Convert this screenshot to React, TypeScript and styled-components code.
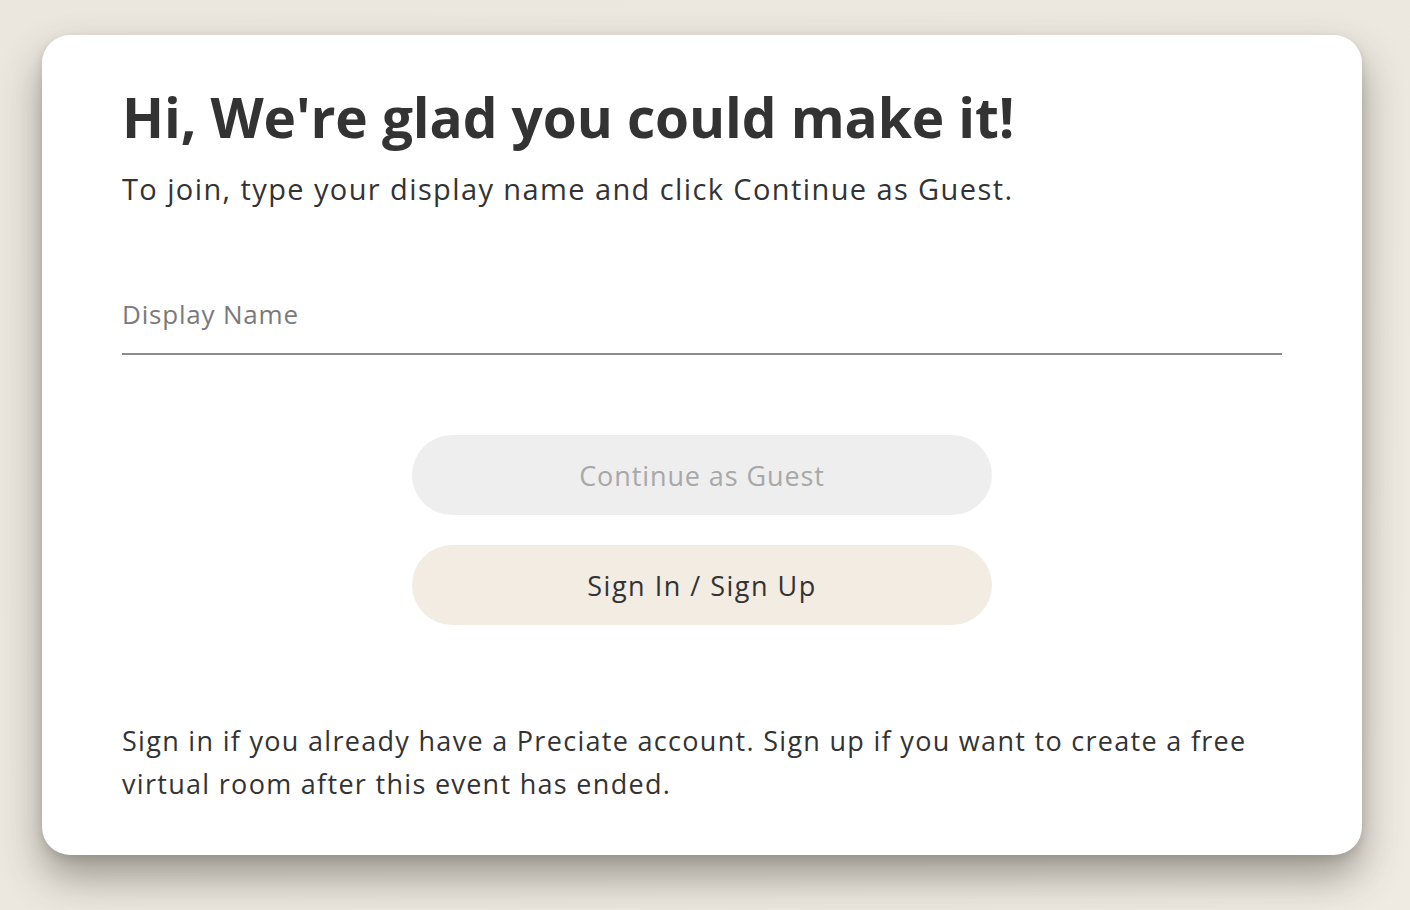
import React from "react";
import styled, { createGlobalStyle } from "styled-components";

const Global = createGlobalStyle`
  html, body { margin: 0; padding: 0; }
  body {
    background: #ebe7df;
    font-family: "Open Sans", "Noto Sans", sans-serif;
    color: #333333;
    -webkit-font-smoothing: antialiased;
  }
`;

const Page = styled.div`
  width: 1410px;
  height: 910px;
  box-sizing: border-box;
  padding: 35px 48px 0 42px;
  background: linear-gradient(135deg, #ebe7df 0%, #ece8e0 60%, #efebe3 100%);
`;

const Card = styled.div`
  width: 1320px;
  height: 820px;
  box-sizing: border-box;
  background: #ffffff;
  border-radius: 28px;
  box-shadow: 0 22px 40px rgba(60, 55, 45, 0.45), 0 4px 10px rgba(60, 55, 45, 0.15);
  padding: 50px 80px 0 80px;
  display: flex;
  flex-direction: column;
`;

const Title = styled.h1`
  margin: 0;
  font-size: 55px;
  font-weight: 700;
  line-height: 64px;
  letter-spacing: -0.1px;
`;

const Subtitle = styled.p`
  margin: 23px 0 0;
  font-size: 29px;
  line-height: 34px;
  font-weight: 400;
  letter-spacing: 1.4px;
`;

const Field = styled.label`
  margin-top: 92px;
  display: block;
  border-bottom: 2px solid #8c8c8c;
  padding-bottom: 23px;
`;

const Input = styled.input`
  border: none;
  outline: none;
  width: 100%;
  padding: 0;
  font-family: inherit;
  font-size: 26px;
  line-height: 32px;
  letter-spacing: 0.8px;
  color: #333;
  &::placeholder { color: #7a7a7a; }
`;

const Buttons = styled.div`
  margin-top: 80px;
  display: flex;
  flex-direction: column;
  align-items: center;
  gap: 30px;
`;

const Button = styled.button<{ $variant: "disabled" | "cream" }>`
  width: 580px;
  height: 80px;
  border: none;
  border-radius: 40px;
  font-family: inherit;
  font-size: 27px;
  letter-spacing: ${(p) => (p.$variant === "disabled" ? "0.9px" : "1.5px")};
  background: ${(p) => (p.$variant === "disabled" ? "#eeeeee" : "#f2ece3")};
  color: ${(p) => (p.$variant === "disabled" ? "#a8a8a8" : "#333333")};
  cursor: ${(p) => (p.$variant === "disabled" ? "default" : "pointer")};
`;

const Footer = styled.p`
  margin: 94px 0 0;
  font-size: 27px;
  line-height: 43px;
  letter-spacing: 1.3px;
  max-width: 1160px;
`;

export default function App() {
  return (
    <>
      <Global />
      <Page>
        <Card>
          <Title>Hi, We're glad you could make it!</Title>
          <Subtitle>To join, type your display name and click Continue as Guest.</Subtitle>
          <Field>
            <Input placeholder="Display Name" />
          </Field>
          <Buttons>
            <Button $variant="disabled" disabled>Continue as Guest</Button>
            <Button $variant="cream">Sign In / Sign Up</Button>
          </Buttons>
          <Footer>
            Sign in if you already have a Preciate account. Sign up if you want to create a free
            virtual room after this event has ended.
          </Footer>
        </Card>
      </Page>
    </>
  );
}
